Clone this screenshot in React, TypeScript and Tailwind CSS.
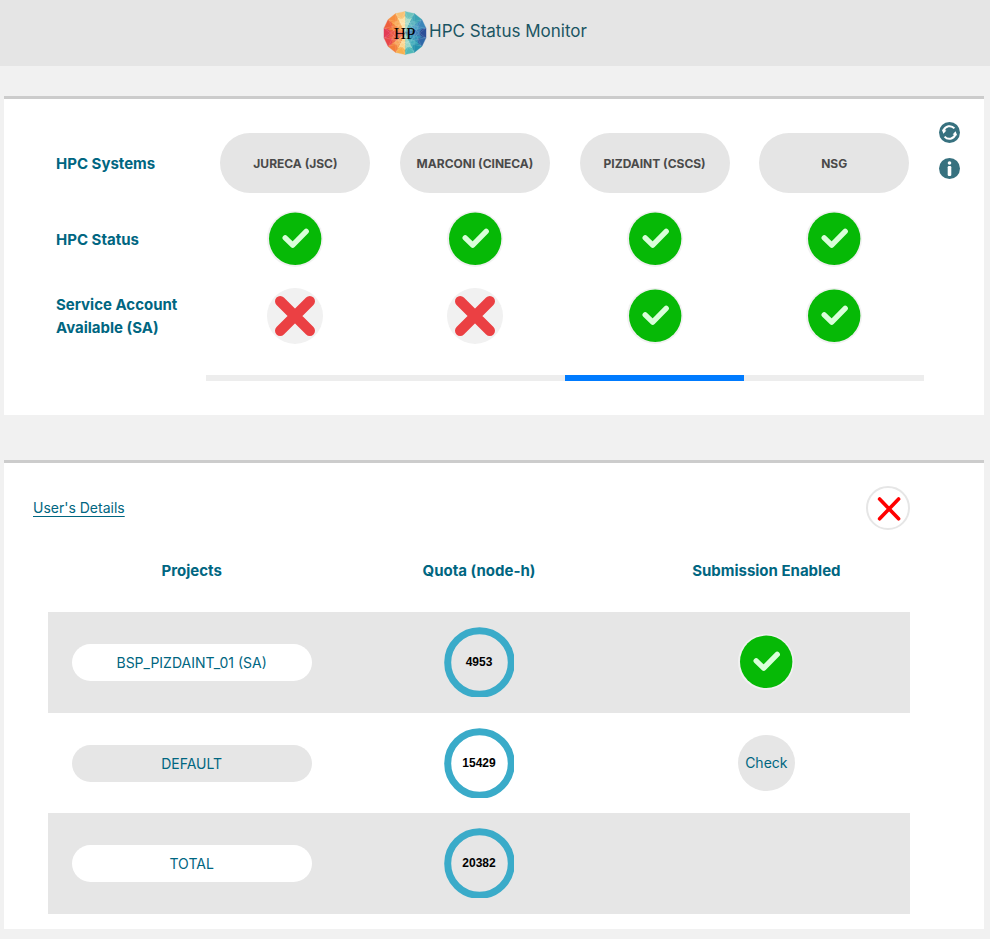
import { useState } from "react";

const systems = [
  { name: "JURECA (JSC)", up: true, account: false },
  { name: "MARCONI (CINECA)", up: true, account: false },
  { name: "PIZDAINT (CSCS)", up: true, account: true },
  { name: "NSG", up: true, account: true },
];

const projects = [
  { name: "BSP_PIZDAINT_01 (SA)", quota: "4953", submission: "ok" },
  { name: "DEFAULT", quota: "15429", submission: "check" },
  { name: "TOTAL", quota: "20382", submission: "none" },
];

// Facet colours of the logo, clockwise from the top: rim, then middle.
const facets = [
  ["#6cc3bd", "#a9dcc8"],
  ["#3aa3b3", "#5cb4bf"],
  ["#3b86ba", "#4fa2c4"],
  ["#2b4f98", "#3f82b8"],
  ["#2f68a8", "#3594b8"],
  ["#2592ad", "#45afbd"],
  ["#4fb8b8", "#98d6c8"],
  ["#f8b04e", "#fcd58e"],
  ["#f37d3a", "#f8a65c"],
  ["#e8474a", "#ef6a4a"],
  ["#e33b55", "#ec5a48"],
  ["#ee5f3c", "#f4843f"],
  ["#f68f3f", "#f9ac5a"],
  ["#f9c274", "#fde0a4"],
];

function corner(index: number, radius: number) {
  const angle = (index / 14) * Math.PI * 2 - Math.PI / 2;
  return `${(22 + Math.cos(angle) * radius).toFixed(2)},${(22 + Math.sin(angle) * radius).toFixed(2)}`;
}

function Logo() {
  return (
    <svg className="size-11 shrink-0" viewBox="0 0 44 44" role="img" aria-label="HP">
      {facets.map(([rim, middle], i) => (
        <g key={i}>
          <polygon points={`22,22 ${corner(i, 21.6)} ${corner(i + 1, 21.6)}`} fill={rim} stroke={rim} strokeWidth="0.3" />
          <polygon points={`22,22 ${corner(i, 17)} ${corner(i + 0.5, 14)} ${corner(i + 1, 17)}`} fill={middle} />
        </g>
      ))}
      {facets.map((_, i) => (
        <polyline
          key={i}
          points={`${corner(i, 21)} ${corner(i + 5, 21)}`}
          fill="none"
          stroke="#ffffff"
          strokeWidth="0.6"
          opacity="0.22"
        />
      ))}
      <circle cx="22" cy="22" r="7" fill="#ffffff" opacity="0.15" />
      <text
        x="21.5"
        y="28"
        textAnchor="middle"
        fontFamily="Liberation Serif, serif"
        fontSize="17"
        fill="#000000"
      >
        HP
      </text>
    </svg>
  );
}

function Tick() {
  return (
    <svg className="mx-auto size-14" viewBox="0 0 56 56" role="img" aria-label="Yes">
      <circle cx="28" cy="28" r="28" fill="#f1f1f1" />
      <circle cx="28.2" cy="27.8" r="26.2" fill="#06b906" />
      <path
        d="M18.2 26.8L25.7 34.2L39.2 20.4"
        fill="none"
        stroke="#d9ffd9"
        strokeWidth="5.4"
        strokeLinecap="round"
        strokeLinejoin="round"
      />
    </svg>
  );
}

function Cross() {
  return (
    <svg className="mx-auto size-14" viewBox="0 0 56 56" role="img" aria-label="No">
      <circle cx="28" cy="28" r="28" fill="#f1f1f1" />
      <path
        d="M13.2 13.2L42.8 42.8M42.8 13.2L13.2 42.8"
        stroke="#eb4043"
        strokeWidth="10.4"
        strokeLinecap="round"
      />
    </svg>
  );
}

function Quota({ value }: { value: string }) {
  return (
    <div className="relative mx-auto size-[70px]">
      <svg className="size-[70px]" viewBox="0 0 70 70" aria-hidden="true">
        <circle cx="35.5" cy="35.5" r="31.8" fill="none" stroke="#3aabc9" strokeWidth="7" />
      </svg>
      <span className="absolute inset-0 flex items-center justify-center font-['Liberation_Sans',sans-serif] text-xs font-bold text-black">
        {value}
      </span>
    </div>
  );
}

export default function App() {
  const [selected, setSelected] = useState(2);

  return (
    <div className="min-h-screen bg-[#f1f1f1] pb-2.5 font-[Inter,'Liberation_Sans',sans-serif] text-sm text-[#006681]">
      <header className="flex h-[66px] items-center justify-center bg-[#e5e5e5] pr-5">
        <Logo />
        <h1 className="pb-1 pl-0.5 text-[17px] text-[#1b5563]">HPC Status Monitor</h1>
      </header>

      <main className="pt-[30px] pr-1.5 pl-1">
        <section className="flex border-t-3 border-[#cccccc] bg-white pt-[26px] pb-[34px] pl-[22px]">
          <div className="flex-1">
            <table className="w-full table-fixed">
              <tbody className="text-[15px] leading-[23px]">
                <tr className="h-[76px]">
                  <th scope="row" className="pl-[30px] text-left font-bold">HPC Systems</th>
                  {systems.map((s, i) => (
                    <td key={s.name}>
                      <button
                        type="button"
                        onClick={() => setSelected(i)}
                        className="mx-auto block h-[60px] w-[150px] rounded-full bg-[#e5e5e5] pt-0.5 text-xs font-bold text-[#4a4a4a]"
                      >
                        {s.name}
                      </button>
                    </td>
                  ))}
                </tr>
                <tr className="h-[76px]">
                  <th scope="row" className="pl-[30px] text-left font-bold">HPC Status</th>
                  {systems.map((s) => (
                    <td key={s.name}>{s.up ? <Tick /> : <Cross />}</td>
                  ))}
                </tr>
                <tr className="h-[78px]">
                  <th scope="row" className="pl-[30px] text-left font-bold">
                    Service Account Available (SA)
                  </th>
                  {systems.map((s) => (
                    <td key={s.name}>{s.account ? <Tick /> : <Cross />}</td>
                  ))}
                </tr>
              </tbody>
            </table>
            <div className="mt-5 grid h-1.5 grid-cols-5">
              <span />
              {systems.map((s, i) => (
                <span key={s.name} className={i === selected ? "bg-[#007bff]" : "bg-[#ededed]"} />
              ))}
            </div>
          </div>
          <div className="-mt-[3px] flex w-[60px] flex-col gap-[15px] pl-[15px]">
            <button type="button" aria-label="Refresh" className="size-[21px]">
              <svg viewBox="0 0 21 21" className="size-[21px]" aria-hidden="true">
                <circle cx="10.5" cy="10.5" r="10.5" fill="#37717f" />
                <g fill="none" stroke="#ffffff" strokeWidth="2">
                  <path d="M4.6 8.6A6.3 6.3 0 0 1 15.4 6.4" />
                  <path d="M16.4 12.4A6.3 6.3 0 0 1 5.6 14.6" />
                </g>
                <path d="M2.8 7.4L7.4 8.6L4.4 11.8ZM18.2 13.6L13.6 12.4L16.6 9.2Z" fill="#ffffff" />
              </svg>
            </button>
            <button type="button" aria-label="Information" className="size-[21px]">
              <svg viewBox="0 0 21 21" className="size-[21px]" aria-hidden="true">
                <circle cx="10.5" cy="10.5" r="10.5" fill="#37717f" />
                <circle cx="10.5" cy="5" r="1.8" fill="#ffffff" />
                <rect x="8.7" y="8" width="3.6" height="10" rx="1.2" fill="#ffffff" />
              </svg>
            </button>
          </div>
        </section>

        <section className="mt-[45px] border-t-3 border-[#cccccc] bg-white pt-[23px] pr-[74px] pb-[15px] pl-11">
          <div className="-ml-[15px] flex h-11 items-center justify-between">
            <a href="#details" className="underline underline-offset-3">User's Details</a>
            <button
              type="button"
              aria-label="Close"
              className="size-11 rounded-full border-2 border-[#e6e6e6] bg-white"
            >
              <svg viewBox="0 0 40 40" className="size-10" aria-hidden="true">
                <path
                  d="M11.6 11L30.6 30.8M30.6 11L11.6 30.8"
                  stroke="#ff0000"
                  strokeWidth="3.6"
                  strokeLinecap="round"
                />
              </svg>
            </button>
          </div>
          <table className="w-full table-fixed text-center">
            <thead className="text-[15px]">
              <tr className="h-[82px]">
                <th scope="col" className="font-bold">Projects</th>
                <th scope="col" className="font-bold">Quota (node-h)</th>
                <th scope="col" className="font-bold">Submission Enabled</th>
              </tr>
            </thead>
            <tbody>
              {projects.map((p) => (
                <tr key={p.name} className="group odd:h-[101px] odd:bg-[#e6e6e6] even:h-[100px]">
                  <td>
                    <div className="mx-auto flex h-[37px] w-60 items-center justify-center rounded-full pt-px group-odd:bg-white group-even:bg-[#e6e6e6]">
                      {p.name}
                    </div>
                  </td>
                  <td className="pb-px"><Quota value={p.quota} /></td>
                  <td className="pb-px">
                    {p.submission === "ok" && <Tick />}
                    {p.submission === "check" && (
                      <button type="button" className="mx-auto block h-14 w-[57px] rounded-full bg-[#e6e6e6]">
                        Check
                      </button>
                    )}
                  </td>
                </tr>
              ))}
            </tbody>
          </table>
        </section>
      </main>
    </div>
  );
}
